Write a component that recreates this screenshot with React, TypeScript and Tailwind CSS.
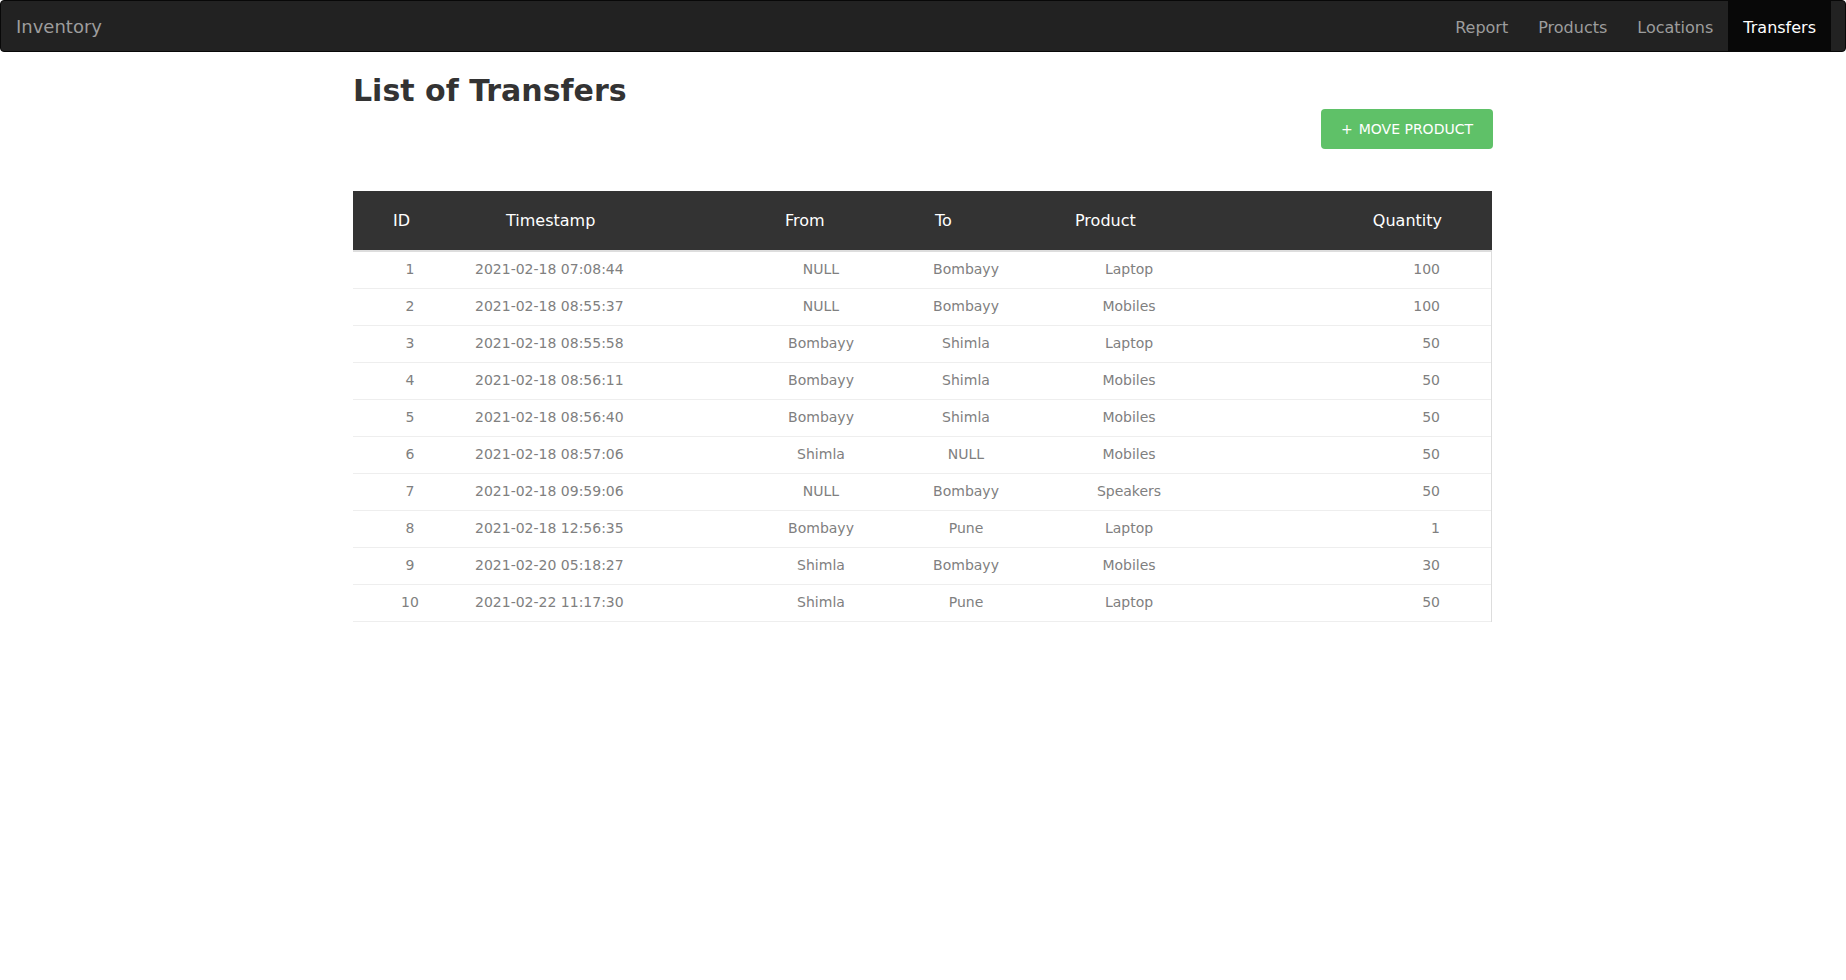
import React from "react";

type Transfer = {
  id: number;
  timestamp: string;
  from: string;
  to: string;
  product: string;
  qty: number;
};

const transfers: Transfer[] = [
  { id: 1, timestamp: "2021-02-18 07:08:44", from: "NULL", to: "Bombayy", product: "Laptop", qty: 100 },
  { id: 2, timestamp: "2021-02-18 08:55:37", from: "NULL", to: "Bombayy", product: "Mobiles", qty: 100 },
  { id: 3, timestamp: "2021-02-18 08:55:58", from: "Bombayy", to: "Shimla", product: "Laptop", qty: 50 },
  { id: 4, timestamp: "2021-02-18 08:56:11", from: "Bombayy", to: "Shimla", product: "Mobiles", qty: 50 },
  { id: 5, timestamp: "2021-02-18 08:56:40", from: "Bombayy", to: "Shimla", product: "Mobiles", qty: 50 },
  { id: 6, timestamp: "2021-02-18 08:57:06", from: "Shimla", to: "NULL", product: "Mobiles", qty: 50 },
  { id: 7, timestamp: "2021-02-18 09:59:06", from: "NULL", to: "Bombayy", product: "Speakers", qty: 50 },
  { id: 8, timestamp: "2021-02-18 12:56:35", from: "Bombayy", to: "Pune", product: "Laptop", qty: 1 },
  { id: 9, timestamp: "2021-02-20 05:18:27", from: "Shimla", to: "Bombayy", product: "Mobiles", qty: 30 },
  { id: 10, timestamp: "2021-02-22 11:17:30", from: "Shimla", to: "Pune", product: "Laptop", qty: 50 },
];

const links = ["Report", "Products", "Locations", "Transfers"];

const Navbar = () => (
  <nav className="flex h-[52px] items-stretch justify-between rounded-[4px] border border-[#080808] bg-[#222222] pl-[15px] pr-[14px]">
    <a className="flex items-center pt-[1px] text-[18px] text-[#9d9d9d]">Inventory</a>
    <ul className="flex items-stretch">
      {links.map((l) => (
        <li
          key={l}
          className={
            l === "Transfers"
              ? "flex items-center bg-[#080808] px-[15px] pt-[3px] text-[16px] text-white"
              : "flex items-center px-[15px] pt-[3px] text-[16px] text-[#9d9d9d]"
          }
        >
          {l}
        </li>
      ))}
    </ul>
  </nav>
);

const App = () => {
  return (
    <div className="min-h-[980px] bg-white font-['DejaVu_Sans',sans-serif]">
      <Navbar />

      <section className="mx-auto w-[1140px] pt-[20px]">
        <div className="flex items-start justify-between">
          <h2 className="mt-[2px] text-[30px] font-bold leading-[33px] text-[#333333]">List of Transfers</h2>
          <button className="mt-[37px] flex h-[40px] items-center rounded-[4px] bg-[#5fc168] px-[20px] text-[14px] uppercase text-white">
            <span className="mr-[6px]">+</span>
            Move Product
          </button>
        </div>

        <div className="mt-[42px] w-[1139px]">
          <div className="flex h-[59px] items-center bg-[#333333] pl-[40px] text-[16px] text-white">
            <div className="w-[113px]">ID</div>
            <div className="w-[279px]">Timestamp</div>
            <div className="w-[150px]">From</div>
            <div className="w-[140px]">To</div>
            <div className="flex-1">Product</div>
            <div className="pr-[50px] text-right">Quantity</div>
          </div>
          <div className="border-t-2 border-r border-[#dddddd]">
            {transfers.map((t) => (
              <div
                key={t.id}
                className="flex h-[37px] items-center border-b border-[#eeeeee] pb-[1px] text-[14px] text-[#808080]"
              >
                <div className="ml-[17px] w-[80px] text-center">{t.id}</div>
                <div className="ml-[25px] w-[200px]">{t.timestamp}</div>
                <div className="ml-[96px] w-[100px] text-center">{t.from}</div>
                <div className="ml-[35px] w-[120px] text-center">{t.to}</div>
                <div className="ml-[43px] w-[120px] text-center">{t.product}</div>
                <div className="flex-1 pr-[51px] text-right">{t.qty}</div>
              </div>
            ))}
          </div>
        </div>
      </section>
    </div>
  );
};

export default App;
